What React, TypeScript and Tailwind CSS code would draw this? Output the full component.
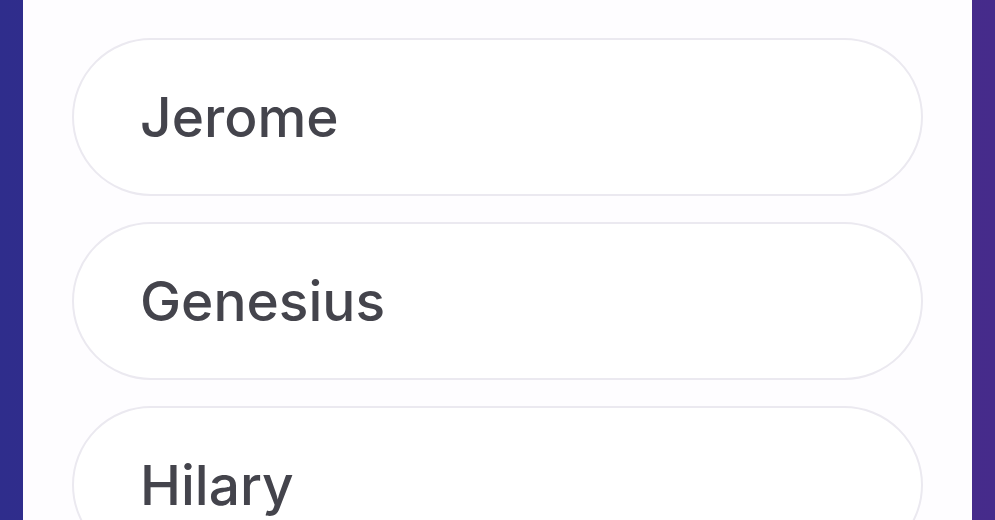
export default function App() {
  const names = ['Jerome', 'Genesius', 'Hilary']

  return (
    <div className="flex h-[520px] w-[995px] overflow-hidden bg-gradient-to-r from-[#2f2d8c] via-[#3a2d8c] to-[#462b8b]">
      <div className="ml-[23px] mr-[23px] flex flex-1 flex-col gap-[26px] bg-[#fefdff] px-[49px] pt-[38px]">
        {names.map((n) => (
          <div
            key={n}
            className="flex h-[158px] shrink-0 items-center rounded-full border-2 border-[#ebe9f0] bg-white pl-[66px]"
          >
            <span className="font-['Inter',sans-serif] text-[55px] font-[550] text-[#44444c]">
              {n}
            </span>
          </div>
        ))}
      </div>
    </div>
  )
}
